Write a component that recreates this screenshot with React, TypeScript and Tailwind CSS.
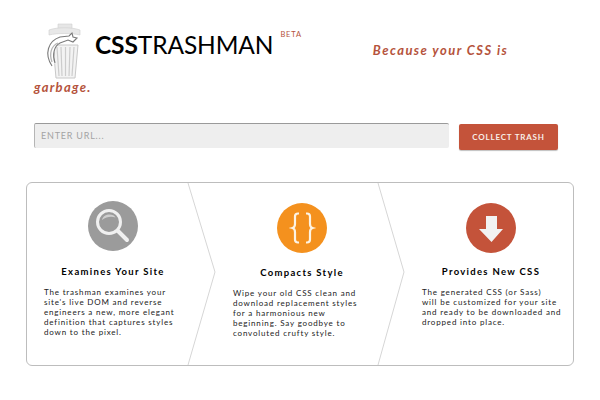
const steps = [
  {
    title: "Examines Your Site",
    body: ["The trashman examines your", "site's live DOM and reverse", "engineers a new, more elegant", "definition that captures styles", "down to the pixel."],
    iconClass: "mt-[18px] bg-[#9b9b9b]",
    titleClass: "mt-[15px]",
    icon: (
      <svg viewBox="0 0 50 50" className="h-full w-full">
        <circle cx="21" cy="21" r="11.500" fill="none" stroke="#f0f0f0" strokeWidth="3" />
        <path d="M14 19c1-4 4-5.500 7.500-5.500 3 0 5 1 6 3-4-1.500-9-1-13.500 2.500z" fill="#f0f0f0" opacity=".6" />
        <path d="M30 30l9 9" stroke="#f0f0f0" strokeWidth="4" strokeLinecap="round" />
      </svg>
    ),
  },
  {
    title: "Compacts Style",
    body: ["Wipe your old CSS clean and", "download replacement styles", "for a harmonious new", "beginning. Say goodbye to", "convoluted crufty style."],
    iconClass: "mt-[20px] bg-[#f4911e]",
    titleClass: "mt-[14px]",
    icon: (
      <svg viewBox="0 0 50 50" className="h-full w-full">
        <path d="M22 10.500h-1c-2 0-3 1-3 3v7.500c0 2-.8 3.500-2.500 4 1.700.5 2.500 2 2.500 4v7.500c0 2 1 3 3 3h1M29 10.500h1c2 0 3 1 3 3v7.500c0 2 .8 3.500 2.500 4-1.700.5-2.500 2-2.500 4v7.500c0 2-1 3-3 3h-1" fill="none" stroke="#fdf3e3" strokeWidth="2.200" />
      </svg>
    ),
  },
  {
    title: "Provides New CSS",
    body: ["The generated CSS (or Sass)", "will be customized for your site", "and ready to be downloaded and", "dropped into place."],
    iconClass: "mt-[20px] bg-[#c4533a]",
    titleClass: "mt-[13px]",
    icon: (
      <svg viewBox="0 0 50 50" className="h-full w-full">
        <path d="M20 13h11v13h6L25.500 39 13 26h7z" fill="#f2f2f2" />
      </svg>
    ),
  },
];

function TrashLogo() {
  return (
    <svg viewBox="0 0 42 62" className="h-[62px] w-[42px] shrink-0">
      <path d="M13 4h14v5H13z" fill="#e6e6e6" stroke="#d2d2d2" strokeWidth=".6" />
      <path d="M4 10c8-3 23-3 31 0v5c-8-2-23-2-31 0z" fill="#e8e8e8" stroke="#cfcfcf" strokeWidth=".6" />
      <path d="M8 25h25l-3 33H11z" fill="#f3f3f3" stroke="#c8c8c8" />
      <path d="M12 27l2 29M16 27l1 29M20.500 27v29M25 27l-1 29M29 27l-2 29" stroke="#cccccc" strokeWidth="1.200" />
      <path d="M7 46C-1 34 3 21 15 17l9-1 3-3 1 4 4 1-4 4-5-2-8 3c-6 3-8 12-5 20" fill="#fff" stroke="#7b7b7b" strokeWidth="1.100" />
      <path d="M7 42c-3-8-1-16 6-19" fill="none" stroke="#b5b5b5" strokeWidth="1.300" />
    </svg>
  );
}

export default function App() {
  return (
    <div className="h-[400px] w-[600px] overflow-hidden bg-white font-['Lato',sans-serif]">
      <header className="pl-[33px] pr-[26px] pt-[20px]">
        <div className="flex items-start">
          <div className="ml-[12px]">
            <TrashLogo />
          </div>
          <div className="ml-[8px] mt-[10px] flex items-start">
            <h1 className="text-[24.500px] leading-[30px] tracking-[-0.1px] text-black">
              <span className="font-bold">CSS</span>TRASHMAN
            </h1>
            <span className="ml-[7px] text-[7.500px] leading-[10px] tracking-[0.8px] text-[#b5533c]">BETA</span>
          </div>
          <p className="ml-[71px] mt-[21px] text-[13px] font-bold italic leading-[18px] tracking-[1.450px] text-[#b5533c]">Because your CSS is</p>
        </div>
        <p className="-mt-[2px] ml-[1px] text-[13px] font-bold italic leading-[14px] tracking-[1.300px] text-[#b5533c]">garbage.</p>
      </header>

      <form className="mt-[29px] flex items-start pl-[34px]">
        <div className="flex h-[25px] w-[415px] items-center rounded-[2px] border-l border-t border-l-[#b5b5b5] border-t-[#9a9a9a] bg-[#eeeeee] pl-[6px] text-[9px] tracking-[0.8px] text-[#a3a3a3]">ENTER URL...</div>
        <button type="button" className="ml-[10px] mt-[1px] h-[26px] w-[99px] rounded-[2px] bg-[#c4533a] text-[8px] font-bold tracking-[0.8px] text-[#f8eee8] shadow-[0_1px_1px_rgba(0,0,0,0.25)]">COLLECT TRASH</button>
      </form>

      <section className="relative mx-[26px] mt-[32px] grid h-[184px] w-[548px] grid-cols-[189px_189px_168px] rounded-[6px] border border-[#bdbdbd]">
        <svg viewBox="0 0 546 182" className="pointer-events-none absolute left-0 top-0 h-[182px] w-[546px]">
          <path d="M161 0l27 89-27 93M351 0l26 89-26 93" fill="none" stroke="#d6d6d6" />
        </svg>
        {steps.map((step) => (
          <div key={step.title} className="flex w-[172px] flex-col items-center">
            <div className={`h-[50px] w-[50px] overflow-hidden rounded-full ${step.iconClass}`}>{step.icon}</div>
            <h2 className={`${step.titleClass} text-[9.500px] font-bold leading-[12px] tracking-[1.300px] text-black`}>{step.title}</h2>
            <div className="mt-[9px] w-full pl-[17px] text-[8px] leading-[10px] tracking-[0.82px] text-[#222222]">
              {step.body.map((line) => (
                <p key={line} className="whitespace-nowrap">{line}</p>
              ))}
            </div>
          </div>
        ))}
      </section>
    </div>
  );
}
